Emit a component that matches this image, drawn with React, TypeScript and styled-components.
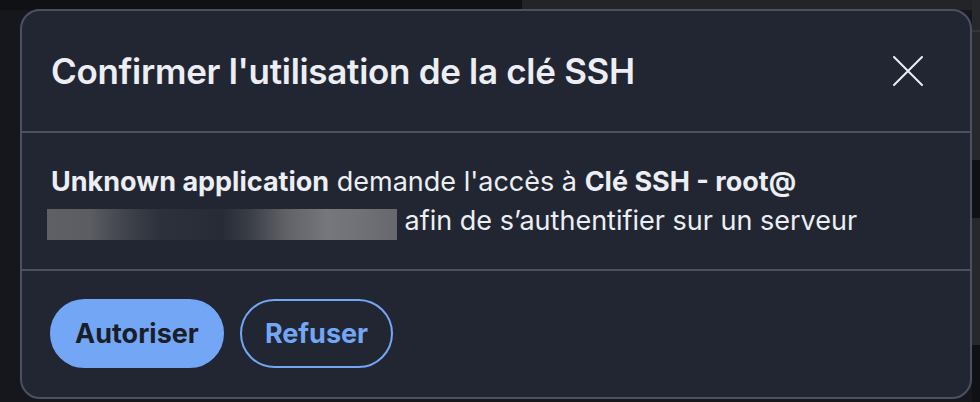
import React from "react";
import styled, { createGlobalStyle } from "styled-components";

// Couleurs de base
const COLORS = {
  page: "#15171d",
  topDark: "#101115",
  topGrey: "#232428",
  rail: "#27282c",
  dialog: "#212632",
  border: "#4b5161",
  text: "#eceef3",
  blue: "#73a6f5",
  onBlue: "#1a1e28",
};

const GlobalStyle = createGlobalStyle`
  html, body {
    margin: 0;
    padding: 0;
    background: ${COLORS.page};
    font-family: "Inter", "Roboto", "Liberation Sans", sans-serif;
    -webkit-font-smoothing: antialiased;
  }
  * { box-sizing: border-box; }
`;

// ---------- Fond de page (derrière la modale) ----------
const Page = styled.div`
  position: relative;
  width: 980px;
  height: 402px;
  overflow: hidden;
  display: flex;
`;

const MainPane = styled.div`
  flex: 1;
  display: flex;
  flex-direction: column;
`;

const TopStrip = styled.div`
  height: 10px;
  display: grid;
  grid-template-columns: 522px 1fr;
`;

const TopCell = styled.div<{ $grey?: boolean }>`
  background: ${(p) => (p.$grey ? COLORS.topGrey : COLORS.topDark)};
`;

const Rail = styled.div`
  width: 8px;
  display: flex;
  flex-direction: column;
`;

const RailSegment = styled.div<{ $h: number; $dark?: boolean; $line?: boolean }>`
  height: ${(p) => p.$h}px;
  flex: ${(p) => (p.$h === 0 ? 1 : "none")};
  background: ${(p) => (p.$dark ? COLORS.topDark : COLORS.rail)};
  border-top: ${(p) => (p.$line ? "2px solid #34353a" : "none")};
`;

// ---------- Modale ----------
const Dialog = styled.div`
  position: absolute;
  left: 20px;
  top: 9px;
  width: 952px;
  height: 390px;
  background: ${COLORS.dialog};
  border: 2px solid ${COLORS.border};
  border-radius: 20px;
  display: flex;
  flex-direction: column;
  color: ${COLORS.text};
`;

const Header = styled.div`
  height: 122px;
  display: flex;
  align-items: center;
  justify-content: space-between;
  padding: 0 44px 0 29px;
  border-bottom: 2px solid ${COLORS.border};
`;

const Title = styled.h2`
  margin: 0;
  font-size: 35px;
  font-weight: 600;
  letter-spacing: -0.3px;
`;

const CloseButton = styled.button`
  width: 36px;
  height: 36px;
  padding: 0;
  border: none;
  background: transparent;
  color: ${COLORS.text};
  display: flex;
  align-items: center;
  justify-content: center;
  cursor: pointer;
`;

const Body = styled.div`
  height: 138px;
  padding: 29px 29px 0;
  border-bottom: 2px solid ${COLORS.border};
`;

const Message = styled.p`
  margin: 0;
  font-size: 27px;
  line-height: 39px;
  width: 880px;
`;

const Strong = styled.strong`
  font-weight: 700;
`;

// Zone floutée (adresse masquée)
const Redacted = styled.span`
  display: inline-block;
  vertical-align: middle;
  width: 350px;
  height: 31px;
  margin-left: -4px;
  margin-top: 3px;
  background: linear-gradient(
    90deg,
    #5e6066 0%,
    #5b5d63 12%,
    #41444c 22%,
    #2c313c 32%,
    #262b36 50%,
    #3a3e47 58%,
    #5f6166 68%,
    #76777c 80%,
    #707176 90%,
    #66686d 100%
  );
`;

const Footer = styled.div`
  flex: 1;
  display: flex;
  align-items: center;
  gap: 16px;
  padding: 0 28px 2px;
`;

const Button = styled.button<{ $primary?: boolean }>`
  height: 69px;
  padding: 0 23px;
  border-radius: 35px;
  font-family: inherit;
  font-size: 27px;
  font-weight: 700;
  cursor: pointer;
  border: 2.5px solid ${COLORS.blue};
  background: ${(p) => (p.$primary ? COLORS.blue : "transparent")};
  color: ${(p) => (p.$primary ? COLORS.onBlue : COLORS.blue)};
`;

const CloseIcon = () => (
  <svg width="30" height="30" viewBox="0 0 30 30" fill="none">
    <path
      d="M1 1 L29 29 M29 1 L1 29"
      stroke="currentColor"
      strokeWidth="2"
      strokeLinecap="round"
    />
  </svg>
);

const App: React.FC = () => (
  <>
    <GlobalStyle />
    <Page>
      <MainPane>
        <TopStrip>
          <TopCell />
          <TopCell $grey />
        </TopStrip>
      </MainPane>
      <Rail>
        <RailSegment $h={30} />
        <RailSegment $h={130} $line />
        <RailSegment $h={58} $dark />
        <RailSegment $h={127} />
        <RailSegment $h={0} $dark />
      </Rail>

      <Dialog role="dialog" aria-modal="true">
        <Header>
          <Title>Confirmer l'utilisation de la clé SSH</Title>
          <CloseButton aria-label="Fermer">
            <CloseIcon />
          </CloseButton>
        </Header>
        <Body>
          <Message>
            <Strong>Unknown application</Strong> demande l'accès à{" "}
            <Strong>Clé SSH - root@</Strong> <Redacted /> afin de s’authentifier
            sur un serveur
          </Message>
        </Body>
        <Footer>
          <Button $primary>Autoriser</Button>
          <Button>Refuser</Button>
        </Footer>
      </Dialog>
    </Page>
  </>
);

export default App;
